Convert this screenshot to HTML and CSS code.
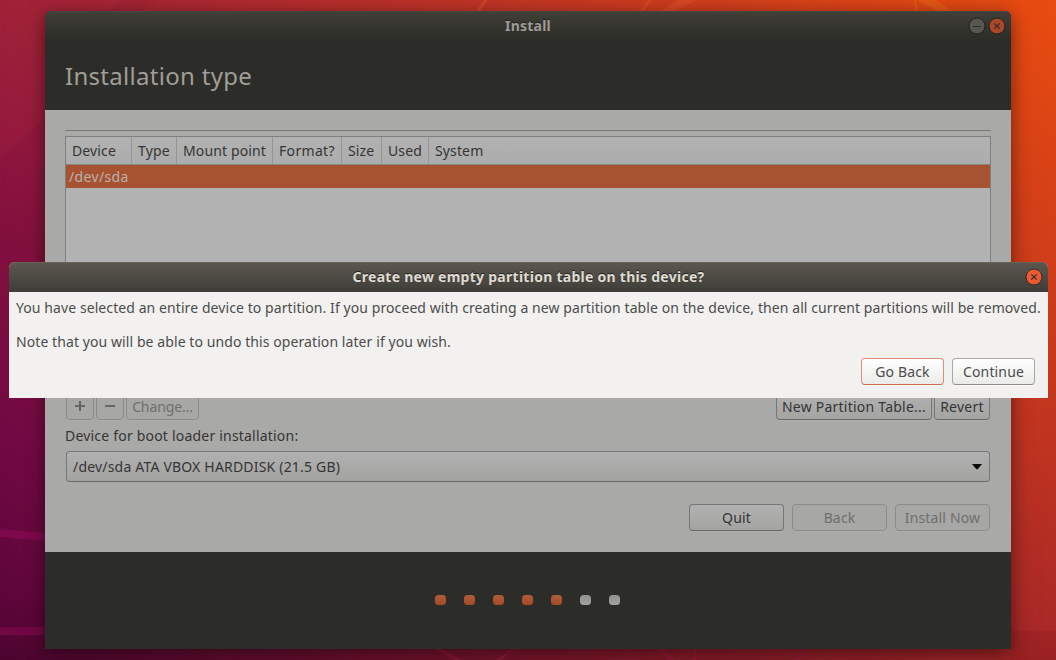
FILE: index.html
```html
<!DOCTYPE html>
<html lang="en">
<head>
<meta charset="utf-8">
<title>Install</title>
<link rel="stylesheet" href="styles.css">
</head>
<body>
<div class="desktop">
  <div class="wallpaper-right"></div>
  <svg class="wallpaper-lines" viewBox="0 0 1056 660" width="1056" height="660">
    <path d="M0 529L45 533V541L0 537z" fill="#85094f" opacity=".8"/>
    <path d="M0 627H45V635H0z" fill="#7d0a4a" opacity=".7"/>
    <path d="M0 158L45 118V262H0z" fill="#7a0840" opacity=".15"/>
    <path d="M0 0H28L45 18V70L0 20z" fill="#b03038" opacity=".06"/>
    <path d="M120 0H160L142 11H110z" fill="#8a1a30" opacity=".2"/>
    <path d="M484 0H488L480 11H476zM648 0H652L644 11H640zM678 0H696L676 11H661z" fill="#e8582a" opacity=".4"/>
    <path d="M917 0H936L952 11H938zM914 0H916L918 11H915z" fill="#e8701c" opacity=".4"/>
    <path d="M659 649H664L674 660H669zM435 649H441L462 660H455zM511 649H515L502 660H496zM693 649H696V660H693zM805 649H809L799 660H795z" fill="#a01840" opacity=".5"/>
    <path d="M1011 631H1056V660H1011z" fill="#80151f" opacity=".2"/>
  </svg>

  <main class="window">
    <div class="titlebar titlebar-dim">
      <span class="title t-install">Install</span>
      <div class="controls">
        <svg width="18" height="18" viewBox="0 0 18 18"><circle cx="9" cy="9" r="8" class="min-disc"/><path d="M5 9.5H13" class="glyph"/></svg>
        <svg width="18" height="18" viewBox="0 0 18 18"><circle cx="9" cy="9" r="8" class="close-disc dim"/><path d="M6.3 6.3L11.7 11.7M11.7 6.3L6.3 11.7" class="glyph"/></svg>
      </div>
    </div>
    <header class="page-head"><h1>Installation type</h1></header>
    <section class="content">
      <div class="rule"></div>
      <div class="table">
        <div class="thead">
          <span class="th c1">Device</span><span class="th c2">Type</span><span class="th c3">Mount point</span><span class="th c4">Format?</span><span class="th c5">Size</span><span class="th c6">Used</span><span class="th c7">System</span>
        </div>
        <div class="trow">/dev/sda</div>
      </div>
      <div class="toolbar">
        <button class="btn off icon"><svg width="12" height="12" viewBox="0 0 12 12"><path d="M1 6H11M6 1V11"/></svg></button>
        <button class="btn off icon"><svg width="12" height="12" viewBox="0 0 12 12"><path d="M1 6H11"/></svg></button>
        <button class="btn off change">Change...</button>
        <span class="spacer"></span>
        <button class="btn newtable">New Partition Table...</button>
        <button class="btn revert">Revert</button>
      </div>
      <div class="label">Device for boot loader installation:</div>
      <div class="combo"><span>/dev/sda ATA VBOX HARDDISK (21.5 GB)</span>
        <svg width="10" height="7" viewBox="0 0 10 7"><path d="M0 1H10L5.6 6.3H4.4z"/></svg></div>
      <div class="actions">
        <button class="btn">Quit</button>
        <button class="btn off">Back</button>
        <button class="btn off">Install Now</button>
      </div>
    </section>
    <footer class="steps">
      <i class="dot on"></i><i class="dot on"></i><i class="dot on"></i><i class="dot on"></i><i class="dot on"></i><i class="dot"></i><i class="dot"></i>
    </footer>
  </main>

  <div class="dialog" role="dialog">
    <div class="titlebar">
      <span class="title t-create">Create new empty partition table on this device?</span>
      <div class="controls">
        <svg width="18" height="18" viewBox="0 0 18 18"><circle cx="9" cy="9" r="8" class="close-disc"/><path d="M6.3 6.3L11.7 11.7M11.7 6.3L6.3 11.7" class="glyph"/></svg>
      </div>
    </div>
    <div class="dialog-body">
      <p>You have selected an entire device to partition. If you proceed with creating a new partition table on the device, then all current partitions will be removed.</p>
      <p>Note that you will be able to undo this operation later if you wish.</p>
      <div class="dialog-actions">
        <button class="btn lit focus">Go Back</button>
        <button class="btn lit">Continue</button>
      </div>
    </div>
  </div>
</div>
</body>
</html>
```
FILE: styles.css
```css
* { box-sizing: border-box; }
body { margin: 0; font: 14px/20px "Noto Sans", "Open Sans", sans-serif; color: #353535; overflow: hidden; }
span, p, .btn { white-space: nowrap; }
.desktop {
  position: relative; width: 1056px; height: 660px; overflow: hidden;
  background: linear-gradient(#a02139, #941a3e 20%, #81113e 38%, #720945 66%, #5e063c 90%, #4c0530);
}
.wallpaper-right {
  position: absolute; inset: 0;
  background: linear-gradient(#e84c0f, #d44018 33%, #c0341f 67%, #aa2927 95%, #a22524);
  -webkit-mask-image: linear-gradient(90deg, transparent, #000);
  mask-image: linear-gradient(90deg, transparent, #000);
}
.wallpaper-lines { position: absolute; left: 0; top: 0; }
.window {
  position: absolute; left: 45px; top: 11px; width: 966px; height: 638px;
  display: flex; flex-direction: column; border-radius: 6px 6px 0 0; overflow: hidden;
  box-shadow: 0 4px 18px rgba(0,0,0,.5); background: #2c2c28;
}
.titlebar {
  height: 30px; flex: none; display: grid; align-items: center; justify-items: center;
  background: linear-gradient(#5c5850, #3e3d37); box-shadow: inset 0 1px #66625a; color: #dfdbd2;
}
.titlebar-dim { background: linear-gradient(#403f38, #2c2c28); box-shadow: inset 0 1px #47453f; color: #a09c96; }
.title { grid-area: 1/1; font-weight: 700; text-shadow: 0 -1px #222; }
.t-install { letter-spacing: .2px; }
.t-create { letter-spacing: .27px; }
.controls { grid-area: 1/1; justify-self: end; display: flex; gap: 2px; padding-right: 5px; }
.controls svg { display: block; }
.min-disc { fill: #575650; stroke: #22221f; }
.close-disc { fill: #ea5b31; stroke: #2f2c28; }
.close-disc.dim { fill: #a94728; stroke: #22221f; }
.glyph { stroke: #2c2c28; stroke-width: 1.1; fill: none; }
.page-head { height: 69px; flex: none; padding: 19px 20px; }
h1 { margin: 0; font-size: 24px; line-height: 32px; font-weight: 400; letter-spacing: .3px; color: #a19e98; white-space: nowrap; }
.content { height: 442px; flex: none; background: #a9a9a7; padding: 20px 20px 0; display: flex; flex-direction: column; }
.rule { height: 1px; background: #7a7a78; flex: none; }
.table { margin-top: 5px; height: 240px; flex: none; border: 1px solid #80807e; background: #b2b2b2; }
.thead { height: 28px; display: flex; border-bottom: 1px solid #878785; background: linear-gradient(#b2b2b2, #acacac); letter-spacing: .13px; }
.th { border-right: 1px solid #969694; padding: 4px 0 0 6px; }
.c1 { width: 66px; } .c2 { width: 45px; } .c3 { width: 96px; } .c4 { width: 69px; letter-spacing: .32px; }
.c5 { width: 40px; } .c6 { width: 47px; } .c7 { border: 0; }
.trow { height: 23px; padding: 2px 3px 0; background: #a75331; color: #b8b2ae; letter-spacing: .35px; }
.toolbar { margin-top: 17px; padding: 0 1px; display: flex; gap: 2px; flex: none; }
.spacer { flex: 1; }
.btn {
  height: 27px; width: 95px; padding: 0; display: flex; align-items: center; justify-content: center;
  font: inherit; letter-spacing: .15px; color: #353535; border: 1px solid #777775; border-bottom-color: #686866; border-radius: 4px;
  background: linear-gradient(#b1b1b1, #a4a4a2); box-shadow: 0 1px rgba(190,190,188,.25);
}
.btn.off { color: #6f6f6d; border-color: #8b8b89; background: #a7a7a5; }
.btn.icon { width: 28px; padding-bottom: 1px; }
.icon svg { fill: none; stroke: #666664; stroke-width: 2; }
.btn.change { width: 73px; letter-spacing: -.12px; }
.newtable { width: 156px; letter-spacing: .23px; }
.revert { width: 56px; letter-spacing: .25px; }
.label { height: 31px; padding-top: 6px; flex: none; letter-spacing: .2px; }
.combo {
  height: 31px; margin: 0 1px; padding: 0 7px 0 6px; flex: none; display: flex; align-items: center; justify-content: space-between;
  letter-spacing: .19px; border: 1px solid #777775; border-bottom-color: #686866; border-radius: 4px;
  background: linear-gradient(#b1b1b1, #a3a3a1);
}
.combo svg { fill: #0c0c0c; display: block; }
.actions { margin-top: 22px; padding-right: 1px; display: flex; justify-content: flex-end; gap: 8px; }
.steps { flex: 1; display: flex; justify-content: center; gap: 18px; padding: 43px 1px 0 0; }
.dot { width: 11px; height: 10px; border-radius: 3.5px; background: linear-gradient(#919191, #a1a1a1); }
.dot.on { background: linear-gradient(#af5c3c, #a54a25); }
.dialog {
  position: absolute; left: 9px; top: 262px; width: 1039px; height: 136px;
  background: #f2f1ef; border-radius: 6px 6px 0 0; overflow: hidden; color: #4c4c4c;
}
.dialog-body { padding: 6px 13px 0 7px; letter-spacing: .083px; }
p { margin: 0 0 14px; height: 20px; }
.dialog-actions { display: flex; justify-content: flex-end; gap: 8px; margin-top: -8px; }
.btn.lit { width: 83px; color: #4c4c4c; border-color: #aaa8a6; border-bottom-color: #8e8c8a; background: linear-gradient(#fff, #ebebe9); box-shadow: 0 1px #f8f8f7; }
.btn.lit.focus { border-color: #db8d75; border-bottom-color: #d06a4b; }
```
